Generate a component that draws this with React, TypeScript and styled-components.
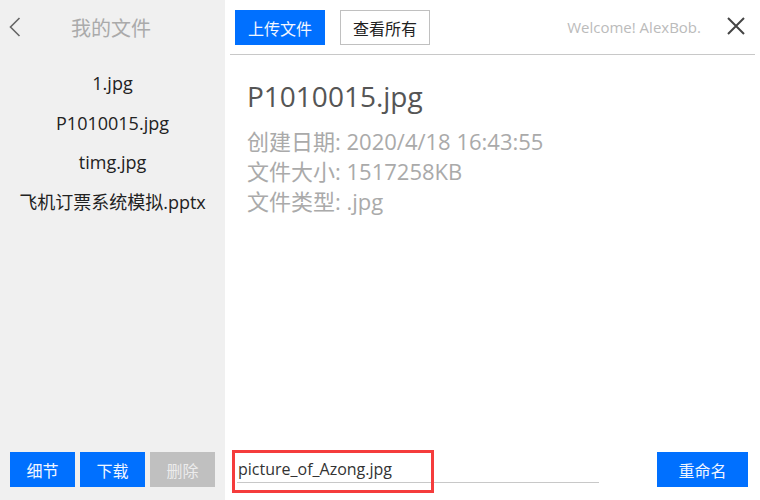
import React from "react";
import styled, { createGlobalStyle } from "styled-components";

const GlobalStyle = createGlobalStyle`
  html, body { margin: 0; padding: 0; background: #ffffff; }
  body { font-family: "Open Sans", "Noto Sans CJK SC", sans-serif; }
  * { box-sizing: border-box; }
`;

const BLUE = "#0070ff";

const Page = styled.div`
  display: flex;
  width: 760px;
  height: 500px;
  overflow: hidden;
`;

const Sidebar = styled.aside`
  width: 225px;
  flex: none;
  background: #f0f0f0;
  display: flex;
  flex-direction: column;
`;

const SideHeader = styled.div`
  height: 54px;
  display: flex;
  align-items: center;
  padding-left: 9px;
`;

const BackButton = styled.button`
  border: 0;
  background: transparent;
  padding: 0;
  width: 14px;
  height: 20px;
  display: flex;
  align-items: center;
  cursor: pointer;
`;

const SideTitle = styled.div`
  flex: 1;
  text-align: center;
  font-size: 20px;
  color: #aaaaaa;
  margin-left: -2px;
  margin-right: 24px;
`;

const FileList = styled.ul`
  list-style: none;
  margin: 16px 0 0;
  padding: 0;
  display: flex;
  flex-direction: column;
  gap: 13.5px;
`;

const FileItem = styled.li`
  text-align: center;
  font-size: 18px;
  line-height: 26px;
  color: #222222;
  cursor: pointer;
`;

const SideActions = styled.div`
  margin-top: auto;
  display: flex;
  gap: 5px;
  padding: 0 0 13px 10px;
`;

const Button = styled.button<{ $variant?: "primary" | "outline" | "disabled"; $width?: number }>`
  width: ${(p) => p.$width ?? 65}px;
  height: 35px;
  font-family: inherit;
  font-size: 16px;
  border: 1px solid
    ${(p) => (p.$variant === "outline" ? "#c0c0c0" : p.$variant === "disabled" ? "#c0c0c0" : BLUE)};
  background: ${(p) => (p.$variant === "outline" ? "#ffffff" : p.$variant === "disabled" ? "#c0c0c0" : BLUE)};
  color: ${(p) => (p.$variant === "outline" ? "#222222" : p.$variant === "disabled" ? "#ececec" : "#f2f6ff")};
  padding: 0;
  cursor: pointer;
`;

const Main = styled.main`
  flex: 1;
  display: flex;
  flex-direction: column;
  background: #ffffff;
`;

const Toolbar = styled.div`
  height: 55px;
  margin: 0 5px;
  border-bottom: 1px solid #c8c8c8;
  display: flex;
  align-items: flex-start;
  padding: 10px 0 0 5px;
  gap: 15px;
`;

const Welcome = styled.span`
  margin-left: auto;
  font-size: 15px;
  color: #bbbbbb;
  line-height: 35px;
  margin-right: 11px;
`;

const CloseButton = styled.button`
  border: 0;
  background: transparent;
  padding: 0;
  width: 18px;
  height: 18px;
  margin: 7px 10px 0 0;
  cursor: pointer;
`;

const Detail = styled.section`
  padding: 22px 0 0 22px;
`;

const DetailTitle = styled.h1`
  margin: 0 0 11px;
  font-weight: 400;
  font-size: 28px;
  line-height: 38px;
  color: #555555;
`;

const InfoLine = styled.div`
  font-size: 22px;
  line-height: 30px;
  color: #aaaaaa;
`;

const BottomBar = styled.div`
  margin-top: auto;
  display: flex;
  align-items: center;
  padding: 0 12px 13px 12px;
  position: relative;
`;

const RenameInput = styled.input`
  width: 362px;
  height: 27px;
  border: 0;
  border-bottom: 1px solid #c8c8c8;
  outline: none;
  font-family: inherit;
  font-size: 16px;
  color: #333333;
  padding: 0 0 0 1px;
  background: transparent;
`;

const Highlight = styled.div`
  position: absolute;
  left: 7px;
  top: -2px;
  width: 202px;
  height: 43px;
  border: 3px solid #f53c3c;
  pointer-events: none;
`;

const Spacer = styled.div`
  flex: 1;
`;

const files = ["1.jpg", "P1010015.jpg", "timg.jpg", "飞机订票系统模拟.pptx"];

export default function App() {
  return (
    <>
      <GlobalStyle />
      <Page>
        <Sidebar>
          <SideHeader>
            <BackButton aria-label="back">
              <svg width="12" height="20" viewBox="0 0 12 20">
                <path d="M10.5 1 L1.5 10 L10.5 19" fill="none" stroke="#666" strokeWidth="1.6" />
              </svg>
            </BackButton>
            <SideTitle>我的文件</SideTitle>
          </SideHeader>
          <FileList>
            {files.map((f) => (
              <FileItem key={f}>{f}</FileItem>
            ))}
          </FileList>
          <SideActions>
            <Button $variant="primary">细节</Button>
            <Button $variant="primary">下载</Button>
            <Button $variant="disabled">删除</Button>
          </SideActions>
        </Sidebar>
        <Main>
          <Toolbar>
            <Button $variant="primary" $width={90}>上传文件</Button>
            <Button $variant="outline" $width={90}>查看所有</Button>
            <Welcome>Welcome! AlexBob.</Welcome>
            <CloseButton aria-label="close">
              <svg width="18" height="18" viewBox="0 0 18 18">
                <path d="M1 1 L17 17 M17 1 L1 17" fill="none" stroke="#444" strokeWidth="2" />
              </svg>
            </CloseButton>
          </Toolbar>
          <Detail>
            <DetailTitle>P1010015.jpg</DetailTitle>
            <InfoLine>创建日期: 2020/4/18 16:43:55</InfoLine>
            <InfoLine>文件大小: 1517258KB</InfoLine>
            <InfoLine>文件类型: .jpg</InfoLine>
          </Detail>
          <BottomBar>
            <RenameInput defaultValue="picture_of_Azong.jpg" />
            <Spacer />
            <Button $variant="primary" $width={91}>重命名</Button>
            <Highlight />
          </BottomBar>
        </Main>
      </Page>
    </>
  );
}
